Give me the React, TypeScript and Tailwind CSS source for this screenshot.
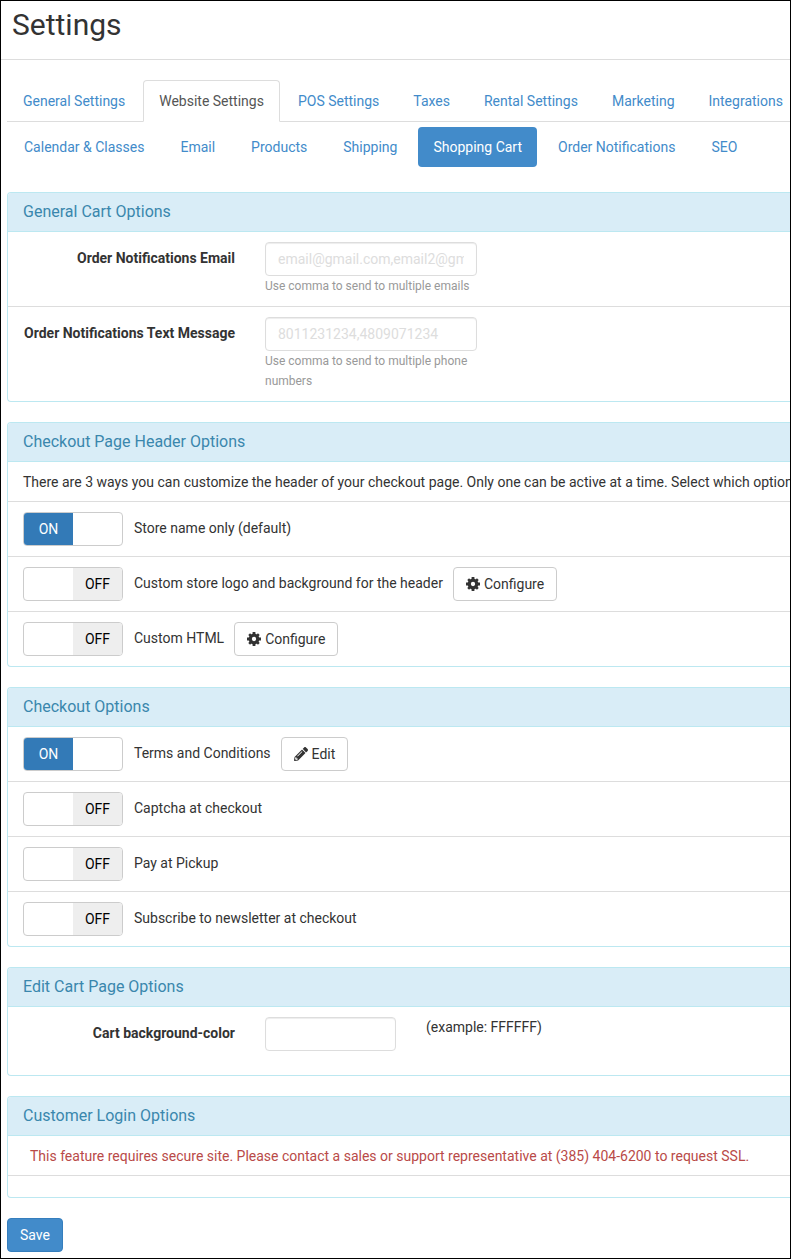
import { useState } from "react";
import type { ReactNode } from "react";
import { FaPencilAlt } from "react-icons/fa";

const tabs = [
  "General Settings",
  "Website Settings",
  "POS Settings",
  "Taxes",
  "Rental Settings",
  "Marketing",
  "Integrations",
];

const pills = [
  "Calendar & Classes",
  "Email",
  "Products",
  "Shipping",
  "Shopping Cart",
  "Order Notifications",
  "SEO",
];

const inputClass =
  "h-[34px] rounded border border-[#ddd] bg-white px-3 text-sm text-[#555] shadow-[inset_0_1px_1px_rgba(0,0,0,0.075)] outline-none placeholder:text-[#ddd] focus:border-[#66afe9]";

const CogIcon = () => (
  <svg viewBox="0 0 24 24" className="size-3.5" fill="none" stroke="currentColor" aria-hidden="true">
    <circle cx="12" cy="12" r="6.5" strokeWidth="5.6" />
    <path strokeWidth="4.8" d="M12 0v5M12 19v5M0 12h5M19 12h5" />
    <path strokeWidth="4.4" d="M3.7 3.7l3.3 3.3M17 17l3.3 3.3M3.7 20.3L7 17M17 7l3.3-3.3" />
  </svg>
);

const Panel = ({ title, children }: { title: string; children: ReactNode }) => (
  <section className="mb-5 rounded-l border-y border-l border-[#bce8f1] bg-white">
    <h2 className="rounded-tl-[3px] border-b border-[#bce8f1] bg-[#d9edf7] px-[15px] py-[9px] text-base leading-5 text-[#3a87ad]">
      {title}
    </h2>
    <div className="divide-y divide-[#ddd]">{children}</div>
  </section>
);

type FieldProps = {
  id: string;
  label: string;
  placeholder?: string;
  help: string;
};

const Field = ({ id, label, placeholder, help }: FieldProps) => (
  <div className="flex py-2.5">
    <label htmlFor={id} className="w-[242px] shrink-0 pt-1.5 pr-[15px] text-right font-bold">
      {label}
    </label>
    <div className="w-[242px] shrink-0 px-[15px]">
      <input id={id} type="text" placeholder={placeholder} className={`${inputClass} block w-full`} />
      <p className="text-xs leading-5 text-[#999]">{help}</p>
    </div>
  </div>
);

type ToggleRowProps = {
  label: string;
  defaultOn?: boolean;
  children?: ReactNode;
};

const ToggleRow = ({ label, defaultOn = false, children }: ToggleRowProps) => {
  const [on, setOn] = useState(defaultOn);

  return (
    <div className="flex items-start gap-2.5 px-[15px] py-2.5">
      <label className="flex cursor-pointer gap-[11px]">
        <input
          type="checkbox"
          className="sr-only"
          checked={on}
          onChange={(e) => setOn(e.target.checked)}
        />
        <span className="flex h-[34px] w-[100px] shrink-0 overflow-hidden rounded border border-[#ccc] leading-8">
          {on ? (
            <span className="w-1/2 bg-[#337ab7] text-center text-white">ON</span>
          ) : (
            <span className="ml-auto w-1/2 bg-[#eee] text-center text-black">OFF</span>
          )}
        </span>
        <span className="pt-1.5">{label}</span>
      </label>
      {children}
    </div>
  );
};

const IconButton = ({ icon, children }: { icon: ReactNode; children: ReactNode }) => (
  <button
    type="button"
    className="flex h-[34px] cursor-pointer items-center gap-1 rounded border border-[#ccc] bg-white px-3 hover:bg-[#ebebeb]"
  >
    {icon}
    {children}
  </button>
);

export default function App() {
  return (
    <div className="min-h-screen overflow-hidden border border-black bg-white font-['Roboto',sans-serif] text-sm leading-5 text-[#333]">
      <header className="border-b border-[#ddd] px-[11px] pt-1.5 pb-4">
        <h1 className="text-[30px] leading-9">Settings</h1>
      </header>

      <main className="pt-5 pb-1.5 pl-1.5">
        <nav className="flex gap-0.5 border-b border-[#ddd] whitespace-nowrap">
          {tabs.map((tab) => (
            <a
              key={tab}
              href="#"
              className={
                tab === "Website Settings"
                  ? "-mb-px rounded-t border border-[#ddd] border-b-white bg-white px-[15px] py-2.5 text-[#555]"
                  : "-mb-px border border-transparent px-[15px] py-2.5 text-[#428bca]"
              }
            >
              {tab}
            </a>
          ))}
        </nav>

        <nav className="mt-[5px] mb-[25px] flex gap-1.5 pl-0.5 whitespace-nowrap">
          {pills.map((pill) => (
            <a
              key={pill}
              href="#"
              className={
                pill === "Shopping Cart"
                  ? "rounded bg-[#428bca] px-[15px] py-2.5 text-white"
                  : "rounded px-[15px] py-2.5 text-[#428bca]"
              }
            >
              {pill}
            </a>
          ))}
        </nav>

        <form onSubmit={(e) => e.preventDefault()}>
          <Panel title="General Cart Options">
            <Field
              id="order-email"
              label="Order Notifications Email"
              placeholder="email@gmail.com,email2@gmail.com"
              help="Use comma to send to multiple emails"
            />
            <Field
              id="order-text"
              label="Order Notifications Text Message"
              placeholder="8011231234,4809071234"
              help="Use comma to send to multiple phone numbers"
            />
          </Panel>

          <Panel title="Checkout Page Header Options">
            <p className="flex h-10 items-center overflow-hidden pl-[15px] whitespace-nowrap">
              There are 3 ways you can customize the header of your checkout page. Only one can be
              active at a time. Select which option
            </p>
            <ToggleRow label="Store name only (default)" defaultOn />
            <ToggleRow label="Custom store logo and background for the header">
              <IconButton icon={<CogIcon />}>Configure</IconButton>
            </ToggleRow>
            <ToggleRow label="Custom HTML">
              <IconButton icon={<CogIcon />}>Configure</IconButton>
            </ToggleRow>
          </Panel>

          <Panel title="Checkout Options">
            <ToggleRow label="Terms and Conditions" defaultOn>
              <IconButton icon={<FaPencilAlt className="size-3.5" />}>Edit</IconButton>
            </ToggleRow>
            <ToggleRow label="Captcha at checkout" />
            <ToggleRow label="Pay at Pickup" />
            <ToggleRow label="Subscribe to newsletter at checkout" />
          </Panel>

          <Panel title="Edit Cart Page Options">
            <div className="flex pt-2.5 pb-6">
              <label
                htmlFor="cart-bg"
                className="w-[242px] shrink-0 pt-1.5 pr-[15px] text-right font-bold"
              >
                Cart background-color
              </label>
              <div className="px-[15px]">
                <input id="cart-bg" type="text" className={`${inputClass} block w-[131px]`} />
              </div>
              <span className="pl-[15px]">(example: FFFFFF)</span>
            </div>
          </Panel>

          <Panel title="Customer Login Options">
            <p className="flex h-10 items-center px-[22px] text-[#b94a48]">
              This feature requires secure site. Please contact a sales or support representative at
              (385) 404-6200 to request SSL.
            </p>
            <div className="h-[21px]" />
          </Panel>

          <button
            type="submit"
            className="h-[34px] cursor-pointer rounded border border-[#357ebd] bg-[#428bca] px-3 text-white hover:bg-[#3276b1]"
          >
            Save
          </button>
        </form>
      </main>
    </div>
  );
}
